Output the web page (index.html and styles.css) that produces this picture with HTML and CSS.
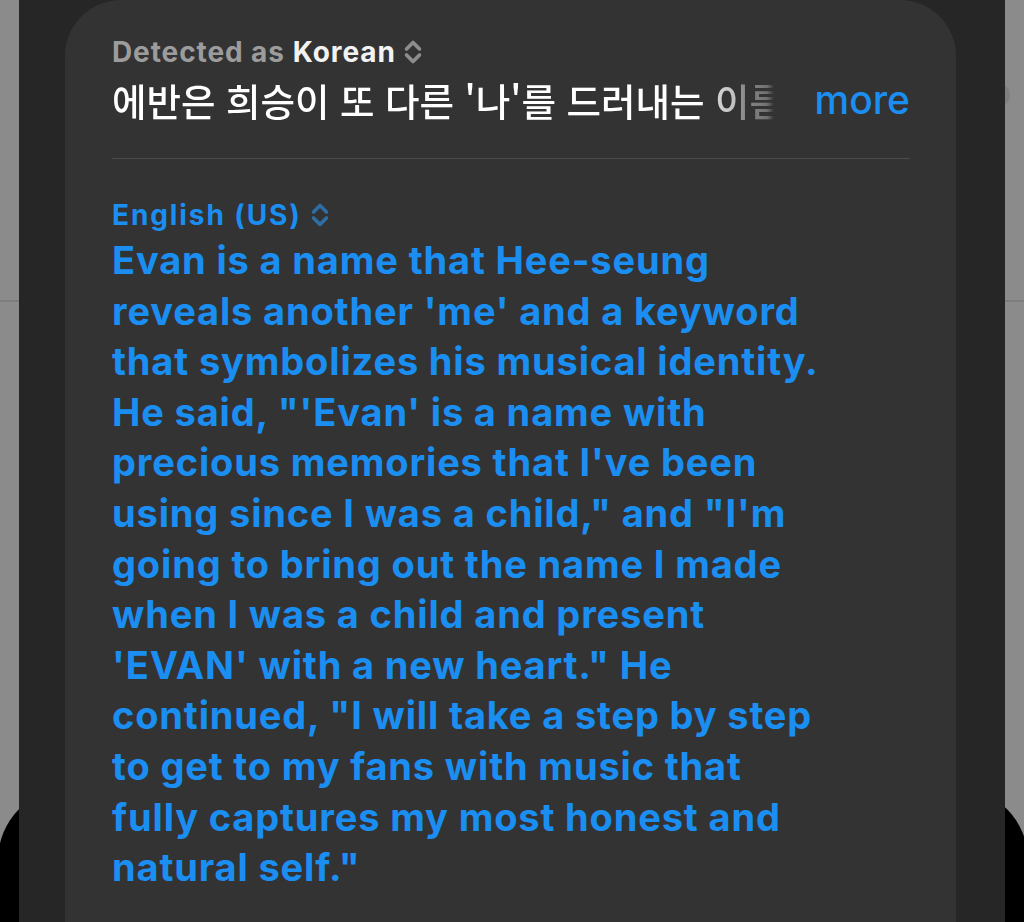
FILE: index.html
```html
<!DOCTYPE html>
<html lang="ko">
<head>
<meta charset="utf-8">
<link rel="stylesheet" href="styles.css">
</head>
<body>
<div class="page">
  <div class="under-black"></div>
  <div class="gray-line"></div>
  <div class="side-dot"></div>
  <div class="sheet">
    <div class="card">
      <div class="lang-row detected">
        <span class="muted">Detected as</span> <span class="lang-name">Korean</span>
        <svg class="chev" width="20" height="28" viewBox="0 0 20 28"><path d="M3.5 11 L10 4.5 L16.5 11" fill="none" stroke="currentColor" stroke-width="3.6" stroke-linecap="round" stroke-linejoin="round"/><path d="M3.5 17 L10 23.5 L16.5 17" fill="none" stroke="currentColor" stroke-width="3.6" stroke-linecap="round" stroke-linejoin="round"/></svg>
      </div>
      <div class="source-row">
        <div class="source-text">에반은 희승이 또 다른 '나'를 드러내는 이름이자 음악적 정체성을 상징하는 키워드다.</div>
        <span class="more">more</span>
      </div>
      <div class="divider"></div>
      <div class="lang-row target">
        <span>English (US)</span>
        <svg class="chev" width="20" height="28" viewBox="0 0 20 28"><path d="M3.5 11 L10 4.5 L16.5 11" fill="none" stroke="currentColor" stroke-width="3.6" stroke-linecap="round" stroke-linejoin="round"/><path d="M3.5 17 L10 23.5 L16.5 17" fill="none" stroke="currentColor" stroke-width="3.6" stroke-linecap="round" stroke-linejoin="round"/></svg>
      </div>
      <div class="translation">
        Evan is a name that Hee-seung<br>
        reveals another 'me' and a keyword<br>
        that symbolizes his musical identity.<br>
        He said, "'Evan' is a name with<br>
        precious memories that I've been<br>
        using since I was a child," and "I'm<br>
        going to bring out the name I made<br>
        when I was a child and present<br>
        'EVAN' with a new heart." He<br>
        continued, "I will take a step by step<br>
        to get to my fans with music that<br>
        fully captures my most honest and<br>
        natural self."
      </div>
    </div>
  </div>
</div>
</body>
</html>
```

FILE: styles.css
```css
html, body {
  margin: 0;
  padding: 0;
}
body {
  background: #8b8b8b;
  width: 1024px;
  height: 922px;
  overflow: hidden;
  font-family: Inter, "Noto Sans", "Noto Sans CJK KR", sans-serif;
}
.page {
  position: relative;
  width: 1024px;
  height: 922px;
  overflow: hidden;
}
.under-black {
  position: absolute;
  left: -2px;
  right: -4px;
  top: 788px;
  height: 300px;
  background: #000;
  border-radius: 72px;
}
.gray-line {
  position: absolute;
  left: 0;
  right: 0;
  top: 300px;
  height: 2px;
  background: #7d7d7d;
}
.side-dot {
  position: absolute;
  left: 996px;
  top: 85px;
  width: 14px;
  height: 20px;
  border-radius: 50%;
  background: #7f7f7f;
}
.sheet {
  position: relative;
  margin: 0 19px;
  height: 922px;
  background: #262626;
  padding: 0 49px 0 46px;
  box-sizing: border-box;
}
.card {
  height: 100%;
  background: #333333;
  border-radius: 56px 56px 0 0;
  padding: 36px 46px 0 47px;
  box-sizing: border-box;
}
.lang-row {
  display: flex;
  align-items: center;
  font-size: 28px;
  font-weight: 700;
  line-height: 32px;
  height: 32px;
}
.detected {
  letter-spacing: 0.9px;
}
.detected .muted {
  color: #9c9c9c;
}
.detected .lang-name {
  color: #f2f2f2;
  margin-left: 8px;
}
.detected .chev {
  color: #8d8d8d;
  margin-left: 7px;
}
.target {
  color: #1b8ef2;
  letter-spacing: 1.9px;
  margin-top: 40px;
}
.target .chev {
  color: #2d6ea6;
  margin-left: 8px;
}
.source-row {
  display: flex;
  align-items: center;
  margin-top: 11px;
  height: 42px;
}
.source-text {
  flex: 0 0 662px;
  white-space: nowrap;
  overflow: hidden;
  color: #ffffff;
  font-family: "Noto Sans CJK KR", sans-serif;
  font-size: 37.5px;
  font-weight: 500;
  line-height: 42px;
  -webkit-mask-image: linear-gradient(to right, #000 0, #000 598px, rgba(0,0,0,0.78) 606px, rgba(0,0,0,0.7) 622px, rgba(0,0,0,0.45) 630px, rgba(0,0,0,0.3) 655px, transparent 662px);
  mask-image: linear-gradient(to right, #000 0, #000 598px, rgba(0,0,0,0.78) 606px, rgba(0,0,0,0.7) 622px, rgba(0,0,0,0.45) 630px, rgba(0,0,0,0.3) 655px, transparent 662px);
}
.more {
  margin-left: auto;
  color: #1b8ef2;
  font-size: 39px;
  font-weight: 500;
  line-height: 42px;
}
.divider {
  height: 1px;
  background: #4b4b4b;
  margin-top: 37px;
}
.translation {
  margin-top: 4px;
  color: #1b8ef2;
  font-size: 38px;
  font-weight: 700;
  line-height: 50.6px;
  letter-spacing: 0.85px;
  white-space: nowrap;
}
```
